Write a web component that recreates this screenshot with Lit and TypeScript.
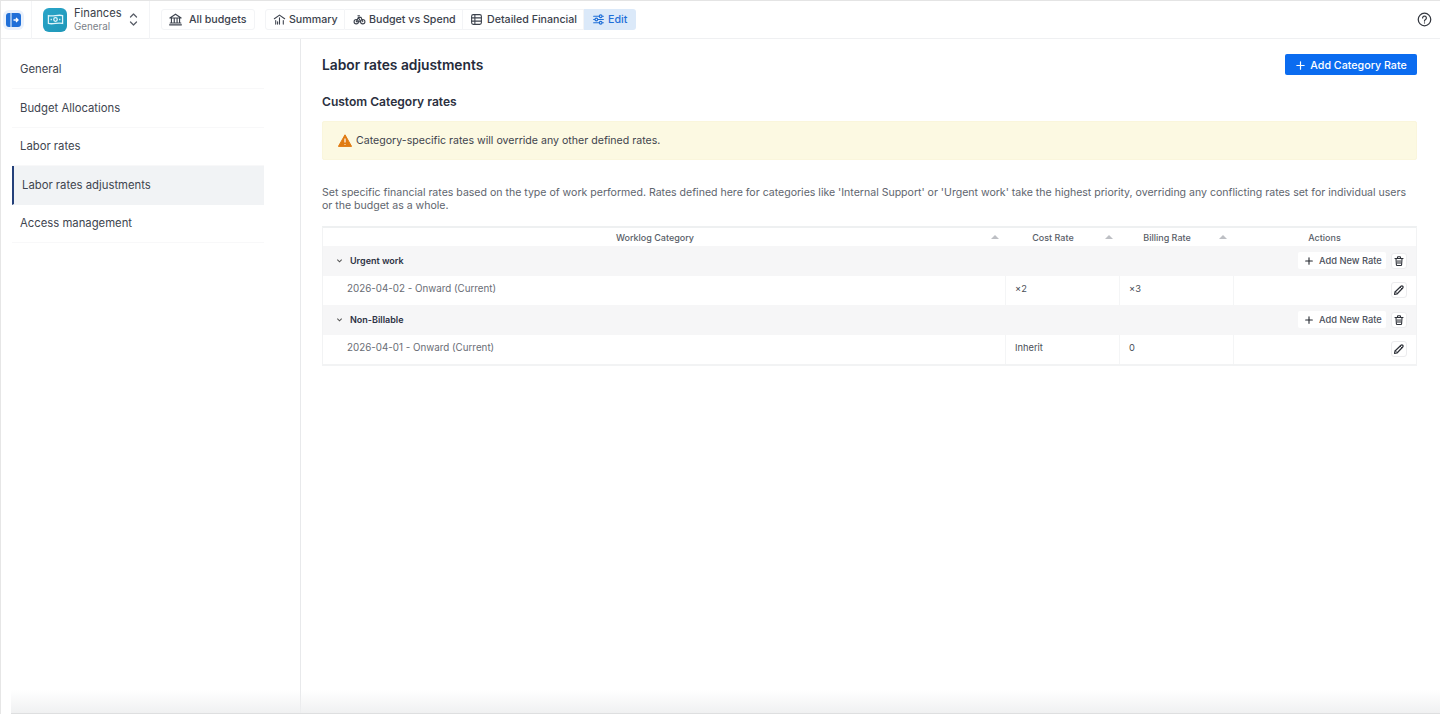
import { LitElement, html, css, svg } from "lit";
import { customElement } from "lit/decorators.js";

const ic = (w: number, body: unknown, cls = "") => html`<svg class="ic ${cls}" width=${w} height=${w} viewBox="0 0 24 24" fill="none" stroke="currentColor" stroke-width="2" stroke-linecap="round" stroke-linejoin="round">${body}</svg>`;

const plus = svg`<path d="M12 4v16M4 12h16" stroke-width="2.600"/>`;
const trash = svg`<path d="M4 7h16M9 7V4.500A1 1 0 0 1 10 3.500h4a1 1 0 0 1 1 1V7M6 7l.8 12.500A1.500 1.500 0 0 0 8.300 21h7.400a1.500 1.500 0 0 0 1.500-1.500L18 7M10 11v6M14 11v6" stroke-width="2.200"/>`;
const pencil = svg`<path d="M16 4.500a2.400 2.400 0 0 1 3.500 3.500L8 20l-5 1 1-5z" stroke-width="2.400"/><path d="M5 16l3.500 3.500M14.500 6.500 17.500 9.500" stroke-width="1.800"/>`;
const bank = svg`<path d="M3 9.500 12 3.500l9 6zM5.500 9.500v8M10 9.500v8M14.500 9.500v8M18.500 9.500v8M3.500 17.500h17M2.500 20.500h19" stroke-width="1.800"/>`;
const summary = svg`<path d="M2.500 10.500 12 4l9.500 6.500M5 14v6.500M12 9v11.500M19 14v6.500M8.500 16v4.500" stroke-width="2"/>`;
const bike = svg`<circle cx="6" cy="16" r="4"/><circle cx="18" cy="16" r="4"/><path d="M6 16 10 8h5l3 8M10 8l4 8H6M9 5h3"/>`;
const table = svg`<rect x="3" y="3" width="18" height="18" rx="3"/><path d="M3 9h18M3 15h18M9 3v18"/>`;
const sliders = svg`<path d="M3 6h10M19 6h2M3 12h2M11 12h10M3 18h10M19 18h2"/><circle cx="16" cy="6" r="2.500"/><circle cx="8" cy="12" r="2.500"/><circle cx="16" cy="18" r="2.500"/>`;
const help = svg`<circle cx="12" cy="12" r="10"/><path d="M9 9.500a3 3 0 1 1 4.500 2.600c-1 .6-1.500 1.200-1.500 2.400"/><path d="M12 17.500v.01"/>`;

@customElement("app-root")
export class AppRoot extends LitElement {
  static styles = css`
    :host { display: flex; flex-direction: column; width: 1440px; height: 714px; overflow: hidden; position: relative; background: #fff; color: #2b303b; font-family: Inter, "Liberation Sans", sans-serif; box-sizing: border-box; border-top: 1px solid #e4e4e4; border-left: 1px solid #e6e6e6; }
    * { box-sizing: border-box; }
    .ic { flex: none; display: block; }
    .top { height: 38px; flex: none; display: flex; align-items: center; border-bottom: 1px solid #eff0f2; }
    .tog { width: 31px; height: 38px; display: flex; align-items: center; padding-left: 5px; border-right: 1px solid #f3f4f6; flex: none; }
    .togb { width: 15px; height: 14px; display: flex; box-shadow: 0 0 0 3px #e9f1fc; border-radius: 3px; background: #e9f1fc; }
    .app { display: flex; align-items: center; width: 118px; height: 38px; padding-left: 11px; border-right: 1px solid #f3f4f6; flex: none; }
    .logo { width: 24px; height: 24px; border-radius: 6px; background: linear-gradient(135deg, #2aa5c9, #1f97b8); display: flex; align-items: center; justify-content: center; color: #dff4fa; flex: none; }
    .apptxt { margin-left: 7px; width: 55px; margin-top: -1px; }
    .appn { font-size: 11.200px; line-height: 14px; color: #3a3f4a; }
    .apps { font-size: 9.800px; line-height: 12px; margin-top: 1px; color: #7a7f88; }
    .chev { color: #5a5f69; }
    .btns { display: flex; align-items: center; height: 22px; }
    .b { height: 21px; display: flex; align-items: center; font-size: 10.650px; font-weight: 500; color: #3c424d; white-space: nowrap; border: 1px solid #f3f4f6; border-left: 0; }
    .allb { margin-left: 11px; width: 94px; padding-left: 6px; gap: 6px; border-left: 1px solid #f3f4f6; border-radius: 3px; }
    .b1 { margin-left: 10px; width: 80px; padding-left: 7px; gap: 3px; border-left: 1px solid #f3f4f6; border-radius: 3px 0 0 3px; }
    .b2 { width: 118px; padding-left: 8px; gap: 3px; }
    .b3 { width: 121px; padding-left: 7px; gap: 4px; }
    .b4 { width: 52px; padding-left: 8px; gap: 3px; background: #dbe9f9; color: #1f6fd8; border: 0; border-radius: 0 3px 3px 0; }
    .help { margin-left: auto; margin-right: 8px; color: #33373f; }
    .body { display: flex; flex: 1; min-height: 0; }
    .side { width: 300px; flex: none; border-right: 1px solid #e8e9eb; padding: 11.500px 36px 0 11px; }
    .nav { height: 38.500px; display: flex; align-items: center; padding-left: 8px; font-size: 11.300px; color: #40454f; border-bottom: 1px solid #f8f8f9; }
    .nav.on { background: #f1f3f5; border-left: 2px solid #24407a; padding-left: 8px; border-bottom-color: transparent; }
    .main { flex: 1; min-width: 0; padding: 15px 23px 0 21px; }
    .head { display: flex; justify-content: space-between; align-items: center; height: 21px; }
    h1 { margin: 0; font-size: 13.800px; font-weight: 600; color: #252b3b; }
    .add { height: 21px; width: 132px; padding-top: 1px; display: flex; align-items: center; justify-content: center; gap: 4px; background: #0b6cf0; color: #fff; border-radius: 2px; font-size: 10.700px; font-weight: 500; }
    h2 { margin: 18px 0 0; font-size: 12.050px; line-height: 17px; font-weight: 600; color: #2b3040; }
    .alert { margin-top: 11px; height: 39px; display: flex; align-items: center; gap: 4px; padding: 0 0 1px 15px; background: #fcf9e2; border: 1px solid #faf6dc; border-radius: 2px; font-size: 10.600px; color: #3f444d; }
    .warn { color: #e07b12; }
    .desc { margin: 26px 0 0; font-size: 10.550px; line-height: 13px; color: #60656e; }
    .tbl { margin-top: 14px; border: 1px solid #f2f3f4; border-top: 2px solid #eef0f1; border-bottom: 2px solid #f2f3f4; }
    .r { display: grid; grid-template-columns: 682px 114px 114px 1fr; }
    .r > div { display: flex; align-items: center; min-width: 0; }
    .hd { height: 18px; font-size: 9px; font-weight: 500; color: #595e68; }
    .hd > div { position: relative; justify-content: center; }
    .hd > .s { padding-right: 18px; }
    .sort { position: absolute; right: 6px; top: 7px; width: 0; height: 0; border: 4px solid transparent; border-top: 0; border-bottom: 4px solid #bdbfc4; }
    .grp { height: 29.500px; background: #f6f6f7; font-size: 9px; font-weight: 600; color: #2d3244; }
    .grp .n { padding: 0 0 1px 13px; gap: 7px; }
    .grp .a { justify-content: flex-end; padding-right: 9px; gap: 5px; grid-column: 4; }
    .grp .sp { grid-column: 2 / 4; }
    .row { height: 29.500px; font-size: 9.300px; color: #4a4f58; }
    .row > div { padding-bottom: 4px; }
    .row .d { padding-left: 24px; color: #696d75; font-size: 9.800px; }
    .row > div + div { border-left: 1px solid #f4f5f6; padding-left: 9px; }
    .row .a { justify-content: flex-end; padding: 0 9px 0 0; }
    .anr { height: 17px; width: 88px; background: #fff; border-radius: 2px; display: flex; align-items: center; gap: 5px; padding-left: 6px; font-size: 9.300px; font-weight: 500; color: #4c515c; }
    .anr .ic { color: #23272f; }
    .sq { width: 16px; height: 16px; background: #fff; border: 1px solid #ececee; border-radius: 3px; display: flex; align-items: center; justify-content: center; color: #2d3038; }
    .shade { position: absolute; left: 10px; right: 0; bottom: 0; height: 24px; background: linear-gradient(to bottom, rgba(238,239,240,0), rgba(238,239,240,.9)); border-bottom: 1px solid #dedfe0; pointer-events: none; }
  `;

  private grp(name: string) {
    return html`<div class="r grp">
      <div class="n"><svg class="ic" width="7" height="7" viewBox="0 0 8 8" fill="none" stroke="#555" stroke-width="1.200"><path d="M1.500 3l2.500 2.500L6.500 3"/></svg>${name}</div>
      <div class="sp"></div>
      <div class="a"><span class="anr">${ic(10, plus)}Add New Rate</span><span class="sq">${ic(12, trash)}</span></div>
    </div>`;
  }
  private row(d: string, c: string, b: string) {
    return html`<div class="r row">
      <div class="d">${d}</div><div>${c}</div><div>${b}</div>
      <div class="a"><span class="sq">${ic(12, pencil)}</span></div>
    </div>`;
  }

  render() {
    return html`
      <div class="top">
        <div class="tog"><span class="togb"><svg width="15" height="14" viewBox="0 0 15 14"><rect width="15" height="14" rx="3" fill="#1f6fd8"/><path d="M5 0v14" stroke="#dbe9f9" stroke-width="1.200"/><path d="M7.500 7h4.500M10 5l2 2-2 2" fill="none" stroke="#fff" stroke-width="1.300"/></svg></span></div>
        <div class="app">
          <span class="logo"><svg width="17" height="17" viewBox="0 0 24 24" fill="none" stroke="currentColor" stroke-width="1.800"><path d="M2 6.500c7 2 13-2 20 0v11c-7-2-13 2-20 0z"/><circle cx="12" cy="12" r="2.500"/><path d="M6 11v2M18 11v2"/></svg></span>
          <span class="apptxt"><div class="appn">Finances</div><div class="apps">General</div></span>
          <svg class="chev" width="9" height="15" viewBox="0 0 9 15" fill="none" stroke="currentColor" stroke-width="1.300" stroke-linecap="round" stroke-linejoin="round"><path d="M1.500 5 4.500 2l3 3M1.500 10l3 3 3-3"/></svg>
        </div>
        <div class="btns">
          <div class="b allb">${ic(15, bank)}All budgets</div>
          <div class="b b1">${ic(13, summary)}Summary</div>
          <div class="b b2">${ic(13, bike)}Budget vs Spend</div>
          <div class="b b3">${ic(13, table)}Detailed Financial</div>
          <div class="b b4">${ic(13, sliders)}Edit</div>
        </div>
        <div class="help">${ic(15, help)}</div>
      </div>
      <div class="body">
        <div class="side">
          <div class="nav">General</div>
          <div class="nav">Budget Allocations</div>
          <div class="nav">Labor rates</div>
          <div class="nav on">Labor rates adjustments</div>
          <div class="nav">Access management</div>
        </div>
        <div class="main">
          <div class="head"><h1>Labor rates adjustments</h1><div class="add">${ic(11, plus)}Add Category Rate</div></div>
          <h2>Custom Category rates</h2>
          <div class="alert"><svg class="ic warn" width="14" height="13" viewBox="0 0 14 13"><path d="M7 .800 13.600 12.400H.400z" fill="currentColor" stroke="currentColor" stroke-linejoin="round"/><path d="M7 4.500v4M7 10v.8" stroke="#fff" stroke-width="1.200"/></svg>Category-specific rates will override any other defined rates.</div>
          <p class="desc">Set specific financial rates based on the type of work performed. Rates defined here for categories like 'Internal Support' or 'Urgent work' take the highest priority, overriding any conflicting rates set for individual users or the budget as a whole.</p>
          <div class="tbl">
            <div class="r hd">
              <div class="s">Worklog Category<span class="sort"></span></div>
              <div class="s">Cost Rate<span class="sort"></span></div>
              <div class="s">Billing Rate<span class="sort"></span></div>
              <div>Actions</div>
            </div>
            ${this.grp("Urgent work")}
            ${this.row("2026-04-02 - Onward (Current)", "×2", "×3")}
            ${this.grp("Non-Billable")}
            ${this.row("2026-04-01 - Onward (Current)", "Inherit", "0")}
          </div>
        </div>
      </div>
      <div class="shade"></div>
    `;
  }
}
